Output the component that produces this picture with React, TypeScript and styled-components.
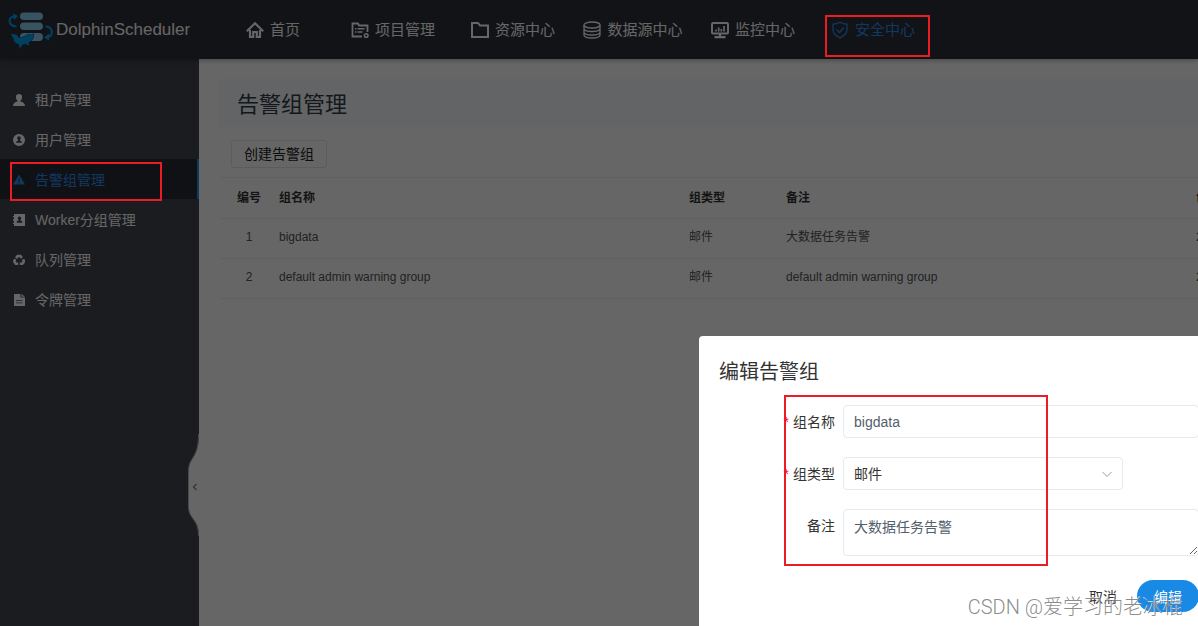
import React from 'react';
import styled, { createGlobalStyle } from 'styled-components';

const Global = createGlobalStyle`
  * { box-sizing: border-box; }
  html, body, #root { height: 100%; }
  body {
    margin: 0;
    overflow: hidden;
    background: #fff;
    font-family: "Liberation Sans", "Noto Sans CJK SC", sans-serif;
    font-size: 14px;
    line-height: 20px;
    color: #333;
  }
  button, input, textarea, select { font: inherit; }
`;

const Page = styled.div`
  position: relative;
  display: flex;
  flex-direction: column;
  min-height: 100vh;
  overflow: hidden;
`;

const Header = styled.header`
  position: relative;
  z-index: 1;
  display: flex;
  align-items: center;
  height: 59px;
  background: #2d3039;
  box-shadow: 0 1px 5px rgba(0, 0, 0, 0.35);
`;

const Brand = styled.a`
  display: flex;
  align-items: center;
  gap: 2px;
  width: 213px;
  height: 59px;
  padding-left: 8px;
  color: #fff;
  font-size: 17px;
  text-decoration: none;
  flex: none;
`;

const Nav = styled.nav`
  display: flex;
`;

const NavLink = styled.a<{ $active?: boolean }>`
  display: flex;
  align-items: center;
  justify-content: center;
  gap: 6px;
  width: 120px;
  height: 59px;
  font-size: 15px;
  color: ${(p) => (p.$active ? '#2d8cf0' : '#fff')};
  text-decoration: none;
  white-space: nowrap;
`;

const Body = styled.div`
  display: flex;
  flex: 1;
`;

const Sidebar = styled.aside`
  position: relative;
  flex: none;
  width: 199px;
  padding-top: 20px;
  background: #43464f;
`;

const SideLink = styled.a<{ $active?: boolean }>`
  display: flex;
  align-items: center;
  gap: 10px;
  height: 40px;
  padding: 2px 0 0 13px;
  border-right: 2px solid ${(p) => (p.$active ? '#2d8cf0' : 'transparent')};
  background: ${(p) => (p.$active ? '#2a2c33' : 'transparent')};
  color: ${(p) => (p.$active ? '#2d8cf0' : '#fff')};
  text-decoration: none;
`;

const Collapse = styled.button`
  position: absolute;
  right: 0;
  bottom: 90px;
  width: 11px;
  height: 102px;
  padding: 0;
  border: 0;
  background: none;
  svg { display: block; }
`;

const Main = styled.main`
  flex: 1;
  min-width: 0;
  padding: 20px 0 0 20px;
  background: #fff;
`;

const Title = styled.h1`
  margin: 0;
  padding: 2px 18px 0;
  height: 48px;
  line-height: 48px;
  background: #f7faff;
  color: #333d48;
  font-size: 22px;
  font-weight: 400;
`;

const Tools = styled.div`
  display: flex;
  padding: 13px 12px 9px;
`;

const CreateButton = styled.button`
  height: 28px;
  width: 96px;
  padding: 0;
  border: 1px solid #e6e7ec;
  border-radius: 3px;
  background: #fff;
  color: #222;
`;

const Table = styled.table`
  width: calc(100% + 118px);
  table-layout: fixed;
  border-collapse: collapse;
  border-top: 1px solid #f1f1fa;
  font-size: 12px;
  color: #555;
  th, td {
    height: 40px;
    padding: 0 0 3px;
    border-bottom: 1px solid #f1f1fa;
    text-align: left;
    white-space: nowrap;
  }
  th {
    height: 41px;
    padding: 0 0 1px;
    color: #333;
  }
  th:first-child, td:first-child { text-align: center; }
`;

const Col = styled.col<{ $width?: number }>`
  width: ${(p) => (p.$width ? `${p.$width}px` : 'auto')};
`;

const Overlay = styled.div`
  position: absolute;
  inset: 0;
  z-index: 2;
  display: flex;
  align-items: flex-end;
  justify-content: flex-end;
  background: rgba(0, 0, 0, 0.6);
`;

const Modal = styled.form`
  width: 520px;
  margin: 0 -21px -6px 0;
  padding: 20px;
  border-radius: 4px;
  background: #fff;
`;

const ModalTitle = styled.h2`
  margin: 0 0 17px;
  font-size: 20px;
  line-height: 32px;
  font-weight: 400;
`;

const Field = styled.div`
  display: grid;
  grid-template-columns: 116px 1fr;
  column-gap: 8px;
  margin-bottom: 19px;
`;

const Label = styled.label`
  line-height: 34px;
  height: 33px;
  text-align: right;
`;

const Required = styled.span`
  margin-right: 4px;
  color: #f03;
`;

const Input = styled.input`
  width: 100%;
  height: 33px;
  padding: 1px 10px 0;
  border: 1px solid #e4eaf1;
  border-radius: 4px;
  background: #fff;
  color: #52606d;
`;

const Area = styled.textarea`
  display: block;
  width: 100%;
  height: 47px;
  padding: 7px 10px;
  border: 1px solid #e4eaf1;
  border-radius: 4px;
  background: #fff;
  color: #52606d;
  resize: vertical;
`;

const SelectBox = styled.div`
  position: relative;
  width: 280px;
  svg {
    position: absolute;
    right: 10px;
    top: 11px;
    pointer-events: none;
  }
`;

const Select = styled.select`
  appearance: none;
  width: 100%;
  height: 33px;
  padding: 1px 10px 0;
  border: 1px solid #e4eaf1;
  border-radius: 4px;
  background: #fff;
  color: #333;
`;

const Footer = styled.div`
  display: flex;
  justify-content: flex-end;
  gap: 20px;
  padding-top: 5px;
`;

const TextButton = styled.button`
  padding: 2px 0 0;
  border: 0;
  background: none;
  color: #333;
`;

const PrimaryButton = styled.button`
  width: 62px;
  height: 32px;
  padding: 2px 0 0;
  border: 0;
  border-radius: 16px;
  background: #188ae6;
  color: #fff;
`;

const Mark = styled.div<{ $x: number; $y: number; $w: number; $h: number }>`
  position: absolute;
  z-index: 3;
  left: ${(p) => p.$x}px;
  top: ${(p) => p.$y}px;
  width: ${(p) => p.$w}px;
  height: ${(p) => p.$h}px;
  border: 2px solid #ed1c24;
  pointer-events: none;
`;

const Watermark = styled.div`
  position: absolute;
  z-index: 4;
  right: 15px;
  bottom: 4px;
  font-size: 20px;
  line-height: 30px;
  font-family: Roboto, "Noto Sans CJK SC", sans-serif;
  font-weight: 300;
  color: rgba(125, 125, 125, 0.9);
  text-shadow: -1px -1px 0 rgba(255, 255, 255, 0.7);
  white-space: nowrap;
  pointer-events: none;
`;

const Logo = () => (
  <svg width="46" height="40" viewBox="0 0 46 40" aria-hidden="true">
    <g fill="#8cd0f2">
      <rect x="12" y="2.500" width="23" height="7.600" rx="3.800" />
      <rect x="12" y="12.500" width="23" height="7.600" rx="3.800" />
      <rect x="12" y="23" width="23" height="8" rx="4" />
    </g>
    <g fill="none" stroke="#00a2f5" strokeWidth="2">
      <path d="M8.500 16.500C0 16-.5 7 6 6.500" />
      <path d="M37.500 16.500C45 16.500 46 26 40 27" />
    </g>
    <g fill="#00a2f5">
      <path d="M5 3.500l5 2.500-4 4z" />
      <path d="M41 23.500v7l-5-3z" />
    </g>
    <path
      d="M3 22.700C4 24.500 6 23.600 8.200 24.400c1.700.7 1.700 2.300 2.600 3 2 .6 4.500-.2 6.500-1.600 1-.8 2-1.600 3.200-1.600.8 0 1.800.2 2.600.6.800-.6 1.800-1 3-.8-.5.6-.5 1.400-.5 2.400 0 1.600-.9 2.900-2 4l-3.200 2.600c.4 1 1.400 1.600 2.300 2.200-2 .4-4-.2-5.200-1.200-1 .4-2 .5-2.900.7-.6 1.700-2 2.300-2.800 4-.9-1.200-1-2.400-1-4.200C7.500 33.600 5.600 32 5.400 28.500 4 27 3 25 3 22.700z"
      fill="#00a2f5"
      stroke="#2d3039"
      strokeWidth="0.500"
    />
  </svg>
);

const navIcons: Record<string, React.ReactNode> = {
  home: (
    <>
      <path d="M.8 10.200L9 2.200l8.200 8" strokeWidth="2.200" />
      <path d="M4 9v7h3.200v-5h3.600v5H14V9" strokeWidth="2.200" />
    </>
  ),
  project: (
    <>
      <path d="M11 15.500H1.500V2.500H7l1 2h8.500V11" strokeWidth="1.800" />
      <path d="M4 7.800h1.500M6.500 7.800h7M4 11h1.500M6.500 11h5" strokeWidth="1.500" />
      <circle cx="15.200" cy="14.500" r="1.800" strokeWidth="1.500" />
    </>
  ),
  folder: <path d="M1 2h6l2 2.500h8V16H1z" strokeWidth="2" />,
  database: (
    <>
      <ellipse cx="9" cy="4" rx="8" ry="3" />
      <path d="M1 4v10c0 4 16 4 16 0V4M1 7.500c0 4 16 4 16 0M1 11c0 4 16 4 16 0" />
    </>
  ),
  monitor: (
    <>
      <rect x="1" y="2" width="16" height="10.500" rx="1" strokeWidth="2" />
      <path d="M5 10.500V8.500M7.700 10.500V6.500M10.300 10.500V8M13 10.500V5" strokeWidth="1.700" />
      <path d="M9 13v3M3.500 16.200h11" strokeWidth="2.200" />
    </>
  ),
  shield: (
    <>
      <path d="M9 1.200c2 1.300 4 1.800 7 2v5.300c0 4-3 6.500-7 8.300-4-1.800-7-4.300-7-8.300V3.200c3-.2 5-.7 7-2z" />
      <path d="M5.500 8.500l3 3 4.500-5" strokeWidth="1.400" />
    </>
  ),
};

const NavIcon = ({ name }: { name: string }) => (
  <svg width="18" height="18" viewBox="0 0 18 18" fill="none" stroke="currentColor" strokeWidth="1.300" aria-hidden="true">
    {navIcons[name]}
  </svg>
);

const sideIcons: Record<string, React.ReactNode> = {
  user: <path d="M6 0a3 3 0 0 1 3 3.200C9 5 8.300 6 7.500 6.600v.8C10 8 12 9 12 12H0c0-3 2-4 4.500-4.600v-.8C3.700 6 3 5 3 3.200A3 3 0 0 1 6 0z" />,
  userCircle: <path fillRule="evenodd" d="M6 0a6 6 0 1 1 0 12A6 6 0 0 1 6 0zm0 2.200c-1.200 0-1.800.8-1.800 1.900 0 .9.300 1.400.8 1.900v.7c-1 .2-2 .7-2 2h6c0-1.300-1-1.800-2-2V6c.5-.5.8-1 .8-1.900 0-1.100-.6-1.900-1.800-1.900z" />,
  warning: <path fillRule="evenodd" d="M6 .5l6 10H0zM5.500 4.500v3h1v-3zm0 4v1h1v-1z" />,
  contact: <path fillRule="evenodd" d="M1 0h11v12H1v-2H0V8.700h1V6.700H0V5.300h1v-2H0V2h1zm5.500 2.500c-1.200 0-1.700.8-1.700 1.700 0 .8.300 1.300.8 1.700v.6c-1 .2-2 .7-2 2.200h5.800c0-1.500-1-2-2-2.200v-.6c.5-.4.8-.9.8-1.700 0-.9-.5-1.700-1.700-1.700z" />,
  recycle: (
    <g fill="none" stroke="currentColor" strokeWidth="2.600">
      <path d="M3 4.200L4.600 2h2.800l1.400 2M10.300 5.200l.5 2.600-1.600 2H6.800M5.200 9.800H2.800L1.300 7.600 2 5.200" />
    </g>
  ),
  file: <path fillRule="evenodd" d="M1 0h6.500v3.500H12V12H1zm7.500 0L12 2.700H8.500zM3 6v.8h6.500V6zM3 8.500v.8h6.500v-.8z" />,
};

const SideIcon = ({ name }: { name: string }) => (
  <svg width="12" height="12" viewBox="0 0 12 12" fill="currentColor" aria-hidden="true">
    {sideIcons[name]}
  </svg>
);

const navItems = [
  { icon: 'home', text: '首页' },
  { icon: 'project', text: '项目管理' },
  { icon: 'folder', text: '资源中心' },
  { icon: 'database', text: '数据源中心' },
  { icon: 'monitor', text: '监控中心' },
  { icon: 'shield', text: '安全中心', active: true },
];

const sideItems = [
  { icon: 'user', text: '租户管理' },
  { icon: 'userCircle', text: '用户管理' },
  { icon: 'warning', text: '告警组管理', active: true },
  { icon: 'contact', text: 'Worker分组管理' },
  { icon: 'recycle', text: '队列管理' },
  { icon: 'file', text: '令牌管理' },
];

const groups = [
  { id: 1, name: 'bigdata', type: '邮件', note: '大数据任务告警', created: '2021' },
  { id: 2, name: 'default admin warning group', type: '邮件', note: 'default admin warning group', created: '2021' },
];

export default function App() {
  return (
    <Page>
      <Global />
      <Header>
        <Brand href="#">
          <Logo />
          DolphinScheduler
        </Brand>
        <Nav>
          {navItems.map((n) => (
            <NavLink key={n.text} href="#" $active={n.active}>
              <NavIcon name={n.icon} />
              {n.text}
            </NavLink>
          ))}
        </Nav>
      </Header>
      <Body>
        <Sidebar>
          {sideItems.map((s) => (
            <SideLink key={s.text} href="#" $active={s.active}>
              <SideIcon name={s.icon} />
              {s.text}
            </SideLink>
          ))}
          <Collapse type="button" aria-label="收起菜单">
            <svg width="11" height="102" viewBox="0 0 11 102">
              <path d="M11 0C11 26 .5 22 .5 38V72C.5 86 11 84 11 102z" fill="#fff" />
              <path d="M10.500 0C10.500 26 .5 22 .5 38V72C.5 86 10.500 84 10.500 102" fill="none" stroke="#b5b8c8" />
              <path d="M8.500 50L5.500 53l3 3" fill="none" stroke="#7a8296" strokeWidth="1.200" />
            </svg>
          </Collapse>
        </Sidebar>
        <Main>
          <Title>告警组管理</Title>
          <Tools>
            <CreateButton type="button">创建告警组</CreateButton>
          </Tools>
          <Table>
            <colgroup>
              <Col $width={60} />
              <Col />
              <Col $width={97} />
              <Col />
              <Col $width={120} />
            </colgroup>
            <thead>
              <tr>
                <th>编号</th>
                <th>组名称</th>
                <th>组类型</th>
                <th>备注</th>
                <th>创建时间</th>
              </tr>
            </thead>
            <tbody>
              {groups.map((g) => (
                <tr key={g.id}>
                  <td>{g.id}</td>
                  <td>{g.name}</td>
                  <td>{g.type}</td>
                  <td>{g.note}</td>
                  <td>{g.created}</td>
                </tr>
              ))}
            </tbody>
          </Table>
        </Main>
      </Body>
      <Overlay>
        <Modal>
          <ModalTitle>编辑告警组</ModalTitle>
          <Field>
            <Label htmlFor="group-name"><Required>*</Required>组名称</Label>
            <Input id="group-name" defaultValue="bigdata" />
          </Field>
          <Field>
            <Label htmlFor="group-type"><Required>*</Required>组类型</Label>
            <SelectBox>
              <Select id="group-type" defaultValue="邮件">
                <option>邮件</option>
              </Select>
              <svg width="12" height="12" viewBox="0 0 12 12" fill="none" stroke="#9a9cae" aria-hidden="true">
                <path d="M1.500 4L6 8.500 10.500 4" />
              </svg>
            </SelectBox>
          </Field>
          <Field>
            <Label htmlFor="group-note">备注</Label>
            <Area id="group-note" defaultValue="大数据任务告警" />
          </Field>
          <Footer>
            <TextButton type="button">取消</TextButton>
            <PrimaryButton type="button">编辑</PrimaryButton>
          </Footer>
        </Modal>
      </Overlay>
      <Mark $x={825} $y={15} $w={105} $h={42} />
      <Mark $x={10} $y={162} $w={152} $h={39} />
      <Mark $x={784} $y={395} $w={264} $h={171} />
      <Watermark>CSDN @爱学习的老冰棍</Watermark>
    </Page>
  );
}
